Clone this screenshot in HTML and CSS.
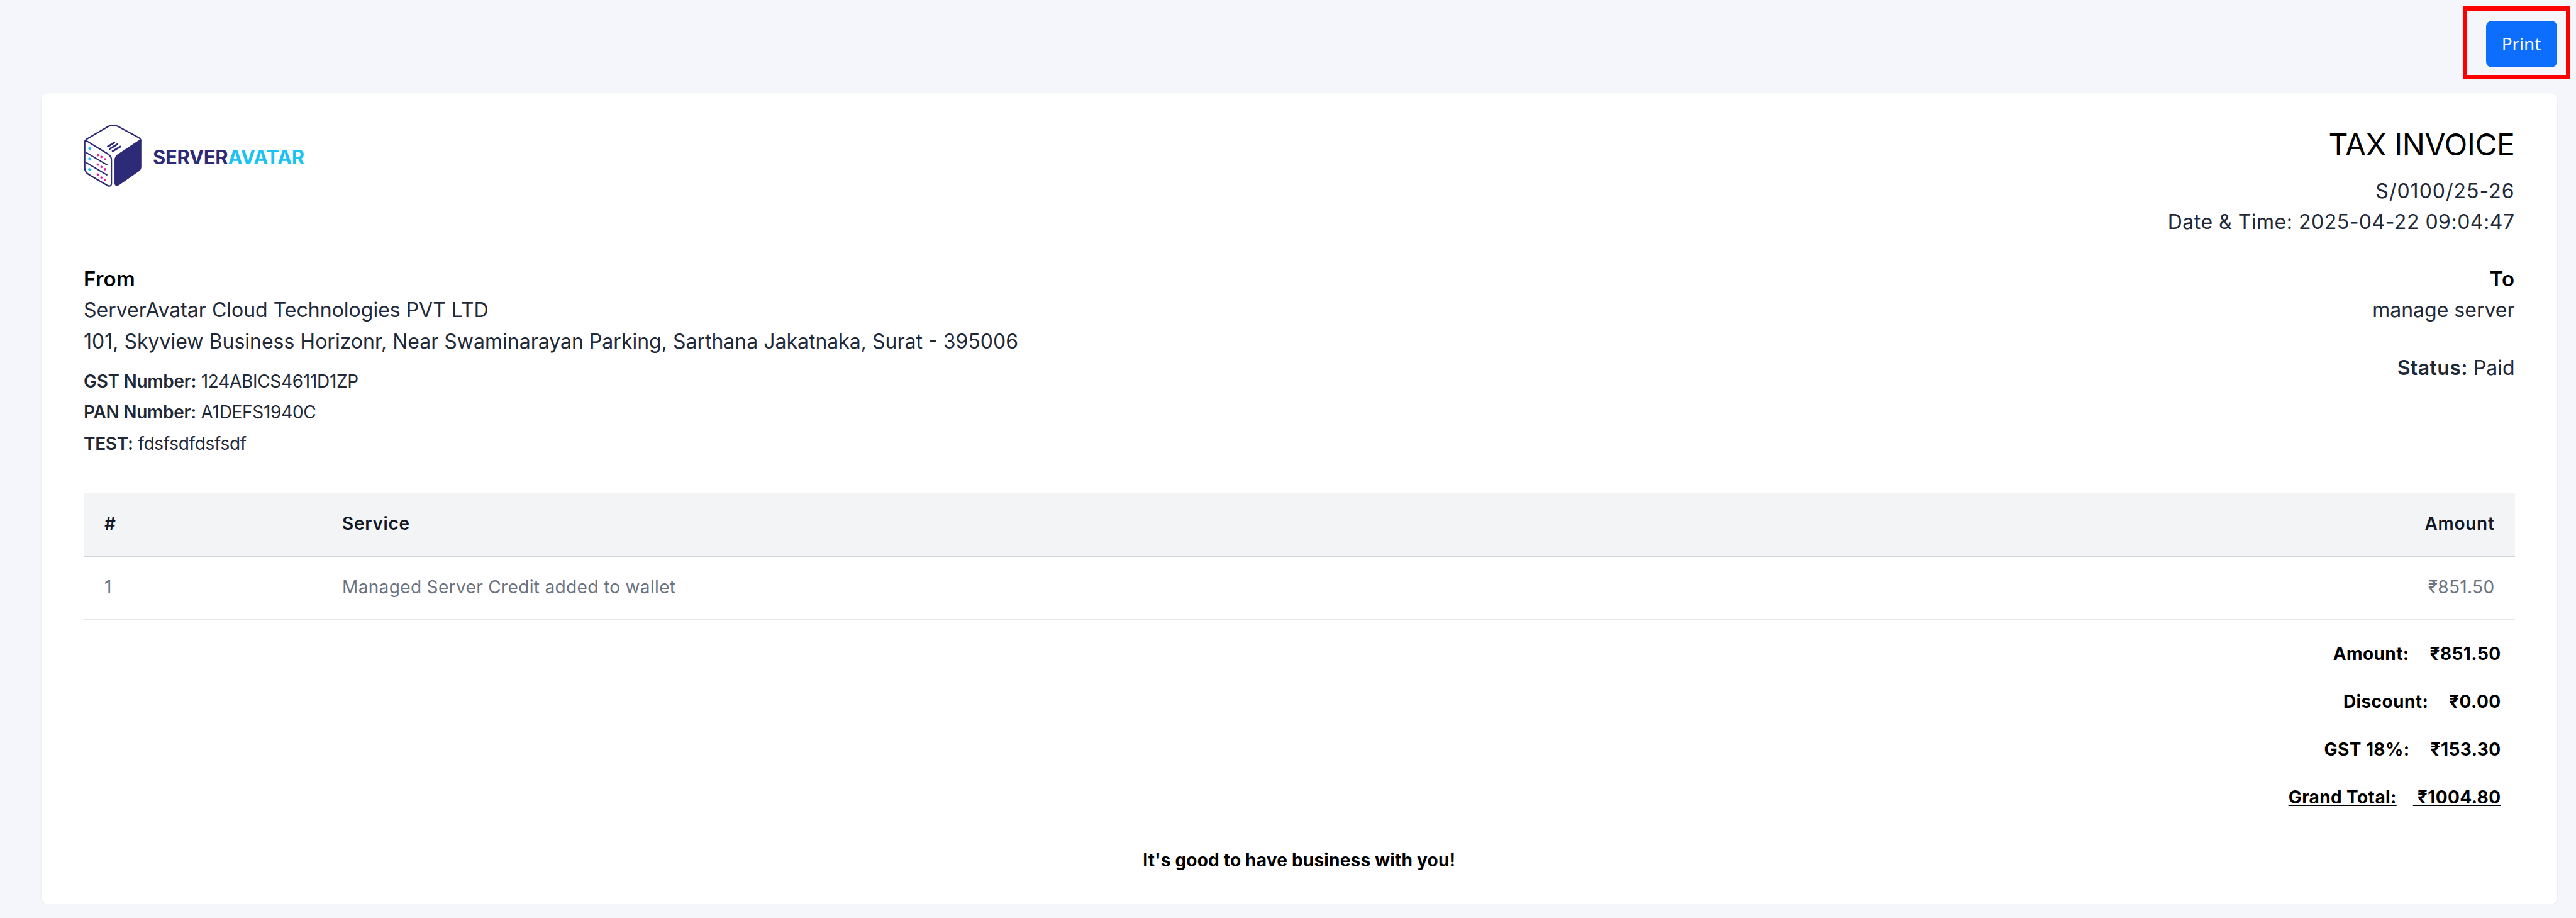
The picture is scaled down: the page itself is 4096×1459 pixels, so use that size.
FILE: index.html
```html
<!DOCTYPE html>
<html lang="en">
<head>
<meta charset="utf-8">
<title>Tax Invoice</title>
<link rel="stylesheet" href="styles.css">
</head>
<body>
<div class="topbar">
  <button class="print-btn" type="button">Print</button>
  <span class="highlight"></span>
</div>
<main class="card">
  <header class="head">
    <div class="logo">
      <svg class="logo-icon" viewBox="0 0 99 106" width="93" height="99" aria-hidden="true">
        <path d="M2 30 Q2 26 6 24 L42 3 Q50 -1 58 3 L93 22 Q97 24 97 28" fill="none" stroke="#2d2a78" stroke-width="2.4"/>
        <path d="M98 26 L98 72 Q98 77 93 80 L60 103 Q52 107 52 98 L52 62 Q52 53 60 49 L93 27 Q96 25 98 26 Z" fill="#2d2a78"/>
        <path d="M5 28 L41 50 Q47 54 47 60 L47 100 Q47 106 41 104 L10 86 Q1.500 81 1.500 74 L1.500 31 Q1.500 26 5 28 Z" fill="none" stroke="#2d2a78" stroke-width="2.4"/>
        <path d="M3 47 L40 69 M3 64 L40 86" stroke="#2d2a78" stroke-width="2.2" fill="none"/>
        <path d="M40 38 L53 30 M43 42 L58 33 M48 46 L63 37" stroke="#2d2a78" stroke-width="3" fill="none"/>
        <path d="M8 39 L12 42 M8 57 L12 60 M8 75 L12 78" stroke="#19c3f5" stroke-width="4" fill="none"/>
        <g fill="#e91e9c">
          <circle cx="24" cy="52" r="2"/><circle cx="30" cy="55" r="2"/><circle cx="36" cy="59" r="2"/>
          <circle cx="24" cy="68" r="2"/><circle cx="30" cy="72" r="2"/><circle cx="36" cy="76" r="2"/>
          <circle cx="24" cy="85" r="2"/><circle cx="30" cy="90" r="2"/><circle cx="36" cy="94" r="2"/>
        </g>
      </svg>
      <span class="logo-text"><span class="logo-dark">SERVER</span><span class="logo-light">AVATAR</span></span>
    </div>
    <div class="invoice-meta">
      <h1 class="title">TAX INVOICE</h1>
      <div class="line invoice-no">S/0100/25-26</div>
      <div class="line invoice-date">Date &amp; Time: 2025-04-22 09:04:47</div>
    </div>
  </header>

  <section class="parties">
    <div class="from">
      <div class="party-label">From</div>
      <div class="line">ServerAvatar Cloud Technologies PVT LTD</div>
      <div class="line">101, Skyview Business Horizonr, Near Swaminarayan Parking, Sarthana Jakatnaka, Surat - 395006</div>
      <div class="tax-info">
        <div class="small"><b>GST Number:</b> 124ABICS4611D1ZP</div>
        <div class="small"><b>PAN Number:</b> A1DEFS1940C</div>
        <div class="small"><b>TEST:</b> fdsfsdfdsfsdf</div>
      </div>
    </div>
    <div class="to">
      <div class="party-label">To</div>
      <div class="line">manage server</div>
      <div class="line status"><b>Status:</b> Paid</div>
    </div>
  </section>

  <table class="items">
    <thead>
      <tr><th class="col-num">#</th><th>Service</th><th class="col-amt">Amount</th></tr>
    </thead>
    <tbody>
      <tr><td class="col-num">1</td><td>Managed Server Credit added to wallet</td><td class="col-amt">₹851.50</td></tr>
    </tbody>
  </table>

  <div class="totals">
    <div class="total-row"><span>Amount:</span><span>₹851.50</span></div>
    <div class="total-row"><span>Discount:</span><span>₹0.00</span></div>
    <div class="total-row"><span>GST 18%:</span><span>₹153.30</span></div>
    <div class="total-row grand"><span>Grand Total:</span><span>&nbsp;₹1004.80</span></div>
  </div>

  <p class="thanks">It's good to have business with you!</p>
</main>
</body>
</html>
```

FILE: styles.css
```css
* { box-sizing: border-box; }
html, body { margin: 0; padding: 0; }
body {
  background: #f5f6fb;
  font-family: "Inter", "Noto Sans", sans-serif;
  color: #1f2937;
  font-size: 32px;
  line-height: 49.4px;
}
.topbar {
  position: relative;
  display: flex;
  justify-content: flex-end;
  padding: 33px 30.5px 0 0;
}
.print-btn {
  width: 113px;
  height: 74px;
  border: 0;
  border-radius: 9px;
  background: #0d6efd;
  color: #fff;
  font-family: "Open Sans", sans-serif;
  font-size: 28px;
  font-weight: 500;
  padding: 0 0 3px;
}
.highlight {
  position: absolute;
  left: 3916px;
  top: 9.500px;
  width: 171px;
  height: 116px;
  border: 7.5px solid #ff0000;
}
.card {
  margin: 41px 30.5px 0 65.5px;
  padding: 41px 67px 45px 67.5px;
  background: #fff;
  border-radius: 10px;
  box-shadow: 0 1px 3px rgba(0, 0, 0, .08);
}
.head { display: flex; justify-content: space-between; align-items: flex-start; }
.logo { display: flex; align-items: center; gap: 17px; padding-top: 8.5px; }
.logo-icon { display: block; }
.logo-text { font-weight: 700; font-size: 31px; line-height: 40px; letter-spacing: -.3px; margin-top: 5px; }
.logo-dark { color: #2d2a78; }
.logo-light { color: #19c3f5; }
.invoice-meta { text-align: right; }
.title {
  margin: 0 0 8px;
  font-size: 48px;
  line-height: 82px;
  font-weight: 400;
  color: #000;
  letter-spacing: -.4px;
}
.invoice-no { letter-spacing: 1px; }
.invoice-date { letter-spacing: .5px; }
.parties { display: flex; justify-content: space-between; margin-top: 41px; }
.party-label { font-size: 33px; font-weight: 600; color: #000; letter-spacing: .3px; }
.tax-info { margin-top: 15px; }
.small { font-size: 28px; letter-spacing: -.3px; }
.small b { font-weight: 600; }
.status b { font-weight: 600; letter-spacing: .4px; }
.to { text-align: right; }
.status { margin-top: 42px; }
.items {
  width: 100%;
  margin-top: 52.5px;
  border-collapse: collapse;
  font-size: 28px;
}
.items th {
  height: 101px;
  padding: 0;
  text-align: left;
  background: #f3f4f6;
  border-bottom: 2px solid #d1d5db;
  color: #111827;
  font-weight: 600;
  letter-spacing: .7px;
}
.items td {
  height: 100px;
  padding: 0;
  color: #6b7280;
  border-bottom: 2px solid #e5e7eb;
  letter-spacing: .35px;
}
.items .col-num { width: 411px; padding-left: 33px; }
.items .col-amt { text-align: right; padding-right: 32px; }
.totals {
  margin-top: 16px;
  padding-right: 22px;
  font-size: 28px;
  font-weight: 700;
  color: #000;
  letter-spacing: .4px;
}
.total-row { display: flex; justify-content: flex-end; gap: 33px; line-height: 76px; }
.grand { gap: 26px; }
.grand span { text-decoration: underline; }
.thanks {
  margin: 38px 0 0;
  text-align: center;
  font-size: 28px;
  font-weight: 700;
  color: #000;
  letter-spacing: .2px;
}
```
